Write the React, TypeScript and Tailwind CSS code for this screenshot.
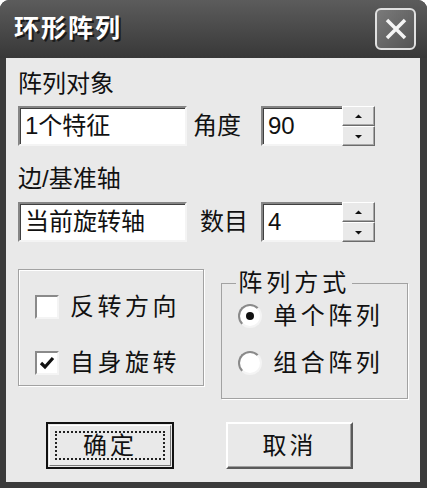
import React from 'react';

const font = { fontFamily: '"Liberation Sans", "Noto Sans CJK SC", sans-serif' };

const Sunken: React.FC<{ className?: string; children?: React.ReactNode }> = ({ className = '', children }) => (
  <div
    className={`h-[40px] bg-white border-2 border-t-[#858585] border-l-[#858585] border-b-[#f4f4f4] border-r-[#f4f4f4] shadow-[inset_1px_1px_0_#404040] flex items-center pl-[5px] text-[24px] leading-none text-[#111] ${className}`}
  >
    {children}
  </div>
);

const Arrow: React.FC<{ down?: boolean }> = ({ down }) => (
  <svg width="7" height="5" viewBox="0 0 7 5">
    {down ? <path d="M0 1h7L3.5 4.5z" fill="#111" /> : <path d="M0 4h7L3.5 0.5z" fill="#111" />}
  </svg>
);

const SpinBtn: React.FC<{ down?: boolean }> = ({ down }) => (
  <div className="h-[20px] w-[33px] bg-[#e9e9e9] border border-t-white border-l-white border-b-[#6b6b6b] border-r-[#6b6b6b] shadow-[inset_-1px_-1px_0_#a8a8a8] flex items-center justify-center">
    <Arrow down={down} />
  </div>
);

const SpinField: React.FC<{ value: string }> = ({ value }) => (
  <div className="flex">
    <Sunken className="w-[81px] border-r-0">{value}</Sunken>
    <div className="flex flex-col">
      <SpinBtn />
      <SpinBtn down />
    </div>
  </div>
);

const CheckBox: React.FC<{ checked?: boolean; label: string }> = ({ checked, label }) => (
  <div className="flex items-center gap-[11px] h-[24px]">
    <div className="w-[24px] h-[24px] bg-white border-2 border-t-[#8a8a8a] border-l-[#8a8a8a] border-b-[#f4f4f4] border-r-[#f4f4f4] flex items-center justify-center">
      {checked && (
        <svg width="16" height="14" viewBox="0 0 16 14">
          <path d="M2 7l4 4 8-9" stroke="#111" strokeWidth="3.2" fill="none" />
        </svg>
      )}
    </div>
    <span className="text-[24px] leading-none tracking-[3.5px] text-[#111]">{label}</span>
  </div>
);

const Radio: React.FC<{ checked?: boolean; label: string }> = ({ checked, label }) => (
  <div className="flex items-center gap-[11px] h-[24px]">
    <div className="w-[24px] h-[24px] rounded-full bg-white border-2 border-t-[#8a8a8a] border-l-[#8a8a8a] border-b-[#f4f4f4] border-r-[#f4f4f4] flex items-center justify-center">
      {checked && <div className="w-[8px] h-[8px] rounded-full bg-[#111]" />}
    </div>
    <span className="text-[24px] leading-none tracking-[3.5px] text-[#111]">{label}</span>
  </div>
);

export default function App() {
  return (
    <div className="w-[427px] h-[488px] bg-white" style={font}>
      <div className="w-[427px] h-[488px] rounded-t-[9px] bg-[#3b3b3b] flex flex-col">
        {/* Title bar */}
        <div className="h-[58px] rounded-t-[9px] bg-gradient-to-b from-[#5c5c5c] via-[#4a4a4a] to-[#383838] flex items-center justify-between pl-[14px] pr-[11px]">
          <span className="text-white text-[25px] font-bold tracking-[2px] [text-shadow:2px_2px_0_#1a1a1a]">环形阵列</span>
          <div className="w-[41px] h-[42px] rounded-[6px] border-2 border-[#e0e0e0] bg-gradient-to-br from-[#7a7a7a] to-[#555] flex items-center justify-center">
            <svg width="24" height="24" viewBox="0 0 24 24">
              <path d="M3 3L21 21M21 3L3 21" stroke="#f4f4f4" strokeWidth="3.5" />
            </svg>
          </div>
        </div>

        {/* Body */}
        <div className="ml-[6px] w-[414px] h-[424px] bg-[#e9e9e9] px-[12px] flex flex-col text-[#111]">
          <div className="mt-[12px] h-[28px] leading-[28px] text-[24px]">阵列对象</div>
          <div className="mt-[8px] flex items-center">
            <Sunken className="w-[169px]">1个特征</Sunken>
            <span className="ml-[6px] w-[68px] text-[24px] leading-none">角度</span>
            <SpinField value="90" />
          </div>

          <div className="mt-[19px] h-[28px] leading-[28px] text-[24px]">边/基准轴</div>
          <div className="mt-[9px] flex items-center">
            <Sunken className="w-[169px]">当前旋转轴</Sunken>
            <span className="ml-[13px] w-[61px] text-[24px] leading-none">数目</span>
            <SpinField value="4" />
          </div>

          <div className="flex items-start gap-[17px]">
            <div className="mt-[27px] w-[191px] h-[117px] border border-[#a2a2a2] shadow-[inset_1px_1px_0_#fff,1px_1px_0_#fff] flex flex-col pl-[16px] pt-[25px] gap-[32px]">
              <CheckBox label="反转方向" />
              <CheckBox checked label="自身旋转" />
            </div>
            <fieldset className="mt-[29px] w-[191px] h-[128px] border border-[#a2a2a2] shadow-[1px_1px_0_#fff] px-[16px] flex flex-col">
              <legend className="px-0 -ml-[2px] pl-[2px] pr-[2px] text-[24px] leading-[24px] tracking-[4px]">阵列方式</legend>
              <div className="mt-[9px] flex flex-col gap-[23px]">
                <Radio checked label="单个阵列" />
                <Radio label="组合阵列" />
              </div>
            </fieldset>
          </div>

          <div className="mt-[23px] flex pl-[28px] gap-[52px]">
            <div className="w-[128px] h-[47px] border-2 border-[#111] bg-[#e9e9e9] p-[1px]">
              <div className="w-full h-full border border-t-white border-l-white border-b-[#777] border-r-[#777] p-[5px]">
                <div className="w-full h-full border-2 border-dotted border-[#222] flex items-center justify-center text-[24px] leading-none tracking-[3px]">
                  确定
                </div>
              </div>
            </div>
            <div className="w-[127px] h-[47px] bg-[#e9e9e9] border-2 border-t-white border-l-white border-b-[#5a5a5a] border-r-[#5a5a5a] shadow-[inset_-1px_-1px_0_#a0a0a0] flex items-center justify-center text-[24px] leading-none tracking-[3px]">
              取消
            </div>
          </div>
        </div>
      </div>
    </div>
  );
}
